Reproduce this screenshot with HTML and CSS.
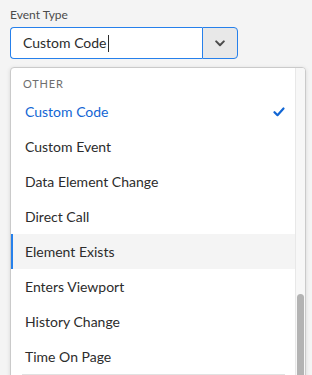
FILE: index.html
```html
<!DOCTYPE html>
<html lang="en">
<head>
    <meta charset="UTF-8">
    <meta name="viewport" content="width=device-width, initial-scale=1.0">
    <title>Event Type</title>
    <link rel="stylesheet" href="styles.css">
</head>
<body>
    <div class="field">
        <label class="field-label">Event Type</label>
        <div class="combo">
            <div class="combo-input">Custom Code<span class="caret"></span></div>
            <button class="combo-btn">
                <svg width="10" height="7" viewBox="0 0 10 7"><path d="M1.2 1.4 L5 5.2 L8.8 1.4" fill="none" stroke="#4b4b4b" stroke-width="2" stroke-linecap="round" stroke-linejoin="round"/></svg>
            </button>
        </div>
    </div>

    <div class="popover">
        <ul class="menu">
            <li class="menu-heading">Other</li>
            <li class="menu-item selected">Custom Code
                <svg class="check" width="12" height="10" viewBox="0 0 12 10"><path d="M1.5 5.2 L4.5 8.2 L10.5 1.5" fill="none" stroke="#1266d4" stroke-width="2.2" stroke-linecap="round" stroke-linejoin="round"/></svg>
            </li>
            <li class="menu-item">Custom Event</li>
            <li class="menu-item">Data Element Change</li>
            <li class="menu-item">Direct Call</li>
            <li class="menu-item focused">Element Exists</li>
            <li class="menu-item">Enters Viewport</li>
            <li class="menu-item">History Change</li>
            <li class="menu-item">Time On Page</li>
            <li class="menu-divider"></li>
        </ul>
        <div class="scrollbar">
            <div class="scroll-thumb"></div>
        </div>
    </div>
</body>
</html>
```

FILE: styles.css
```css
body {
    font-family: Lato, "Open Sans", sans-serif;
    margin: 0;
    background-color: #f4f4f4;
    color: #2c2c2c;
    height: 375px;
    overflow: hidden;
}
.field {
    padding: 7px 0 0 10px;
}
.field-label {
    display: block;
    font-size: 12px;
    line-height: 16px;
    color: #4b4b4b;
    margin-bottom: 4px;
}
.combo {
    display: flex;
    height: 32px;
}
.combo-input {
    width: 192px;
    box-sizing: border-box;
    background: white;
    border: 1px solid #2680eb;
    border-right: none;
    border-radius: 4px 0 0 4px;
    padding: 0 12px;
    font-size: 14px;
    line-height: 30px;
    display: flex;
    align-items: center;
}
.caret {
    display: inline-block;
    width: 1px;
    height: 17px;
    background: #2c2c2c;
    margin-left: 1px;
}
.combo-btn {
    width: 36px;
    box-sizing: border-box;
    background: #e8e8e8;
    border: 1px solid #2680eb;
    border-radius: 0 4px 4px 0;
    padding: 0;
    display: flex;
    align-items: center;
    justify-content: center;
}
.popover {
    display: flex;
    margin: 8px 0 0 10px;
    width: 296px;
    height: 320px;
    box-sizing: border-box;
    background: white;
    border: 1px solid #cacaca;
    border-radius: 4px;
    box-shadow: 0 1px 4px rgba(0,0,0,0.12);
    overflow: hidden;
}
.menu {
    list-style: none;
    margin: 0;
    padding: 6px 0 0;
    flex: 1;
}
.menu-heading {
    font-size: 11px;
    letter-spacing: 0.8px;
    text-transform: uppercase;
    color: #6e6e6e;
    line-height: 20px;
    padding: 0 12px;
}
.menu-item {
    position: relative;
    height: 35px;
    line-height: 35px;
    font-size: 14px;
    padding: 0 12px;
    border-left: 2px solid transparent;
}
.menu-item.selected {
    color: #1266d4;
}
.menu-item.focused {
    background: #f4f4f4;
    border-left-color: #2680eb;
}
.check {
    position: absolute;
    right: 10px;
    top: 13px;
}
.menu-divider {
    height: 1px;
    background: #e1e1e1;
    margin: 0 10px 0 11px;
}
.scrollbar {
    width: 10px;
    background: #f7f7f7;
    border-left: 1px solid #e8e8e8;
    display: flex;
    flex-direction: column;
    align-items: center;
    padding-top: 226px;
    box-sizing: border-box;
}
.scroll-thumb {
    width: 7px;
    height: 120px;
    background: #b3b3b3;
    border-radius: 4px 4px 0 0;
}
```
